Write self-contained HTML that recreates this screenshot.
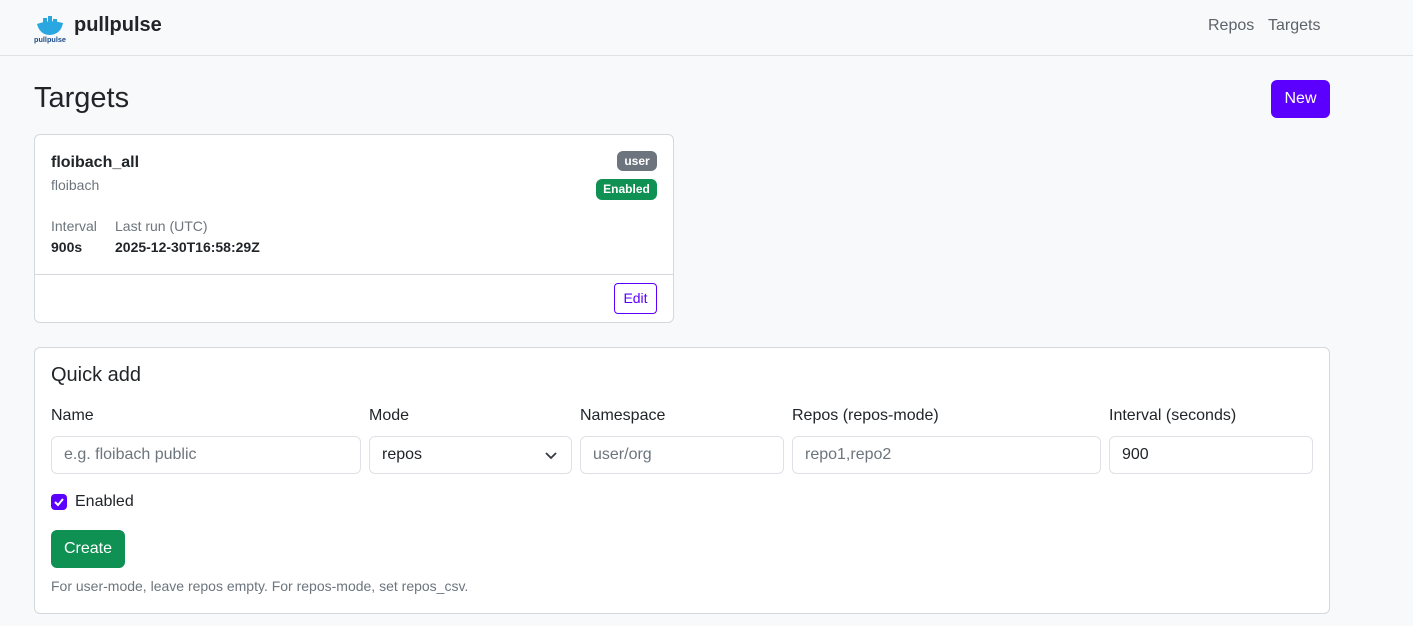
<!DOCTYPE html>
<html><head><meta charset="utf-8"><style>
*{box-sizing:border-box;margin:0;padding:0}
body{width:1413px;height:626px;overflow:hidden;background:#f8f9fa;font-family:"Liberation Sans",sans-serif;color:#212529;font-size:16px;position:relative}
.nav{position:absolute;left:0;top:0;width:1413px;height:56px;background:#f8f9fa;border-bottom:1px solid #dee2e6}
.abs{position:absolute}
.card{position:absolute;background:#fff;border:1px solid #d5d8dc;border-radius:6px}
.badge{position:absolute;color:#fff;font-weight:bold;font-size:12px;border-radius:6px;text-align:center}
.lbl{position:absolute;top:407px;font-size:16px}
.inp{position:absolute;top:436px;height:38px;border:1px solid #dee2e6;border-radius:6px;background:#fff;font-size:16px;padding:9px 12px;color:#6c757d}
</style></head><body>
<div class="nav">
<svg class="abs" style="left:33px;top:10px" width="34" height="34" viewBox="0 0 34 34">
<path d="M4 14 Q17 9 30 13 Q28 24 17 25 Q7 25 4 14Z" fill="#2aa7e0"/>
<rect x="10" y="8" width="4" height="5" fill="#2aa7e0"/><rect x="15" y="6" width="4" height="7" fill="#2aa7e0"/><rect x="20" y="9" width="4" height="4" fill="#2aa7e0"/>
<text x="1" y="32" font-size="7" font-weight="bold" fill="#1a4a8a" font-family="Liberation Sans" textLength="32" lengthAdjust="spacingAndGlyphs">pullpulse</text>
</svg>
<div class="abs" style="left:74px;top:14px;font-size:20px;font-weight:bold">pullpulse</div>
<div class="abs" style="left:1208px;top:17px;color:#5c636a">Repos</div>
<div class="abs" style="left:1268px;top:17px;color:#5c636a">Targets</div>
</div>
<div class="abs" style="left:34px;top:82px;font-size:29px">Targets</div>
<div class="abs" style="left:1271px;top:80px;width:59px;height:38px;background:#5b00ff;color:#fff;border-radius:6px;text-align:center;line-height:38px">New</div>

<div class="card" style="left:34px;top:134px;width:640px;height:189px">
<div class="abs" style="left:16px;top:19px;font-weight:bold;font-size:16px">floibach_all</div>
<div class="abs" style="left:16px;top:42px;color:#6c757d;font-size:14px">floibach</div>
<div class="badge" style="left:582px;top:16px;width:40px;height:20px;line-height:20px;background:#6c757d">user</div>
<div class="badge" style="left:561px;top:44px;width:61px;height:21px;line-height:21px;background:#0f9153">Enabled</div>
<div class="abs" style="left:16px;top:83px;color:#6c757d;font-size:14px">Interval</div>
<div class="abs" style="left:16px;top:104px;font-weight:bold;font-size:14px">900s</div>
<div class="abs" style="left:80px;top:83px;color:#6c757d;font-size:14px">Last run (UTC)</div>
<div class="abs" style="left:80px;top:104px;font-weight:bold;font-size:14px">2025-12-30T16:58:29Z</div>
<div class="abs" style="left:0;top:139px;width:638px;border-top:1px solid #d5d8dc"></div>
<div class="abs" style="left:579px;top:148px;width:43px;height:31px;border:1px solid #5b00ff;border-radius:4px;color:#5b00ff;font-size:14px;text-align:center;line-height:29px">Edit</div>
</div>

<div class="card" style="left:34px;top:347px;width:1296px;height:267px"></div>
<div class="abs" style="left:51px;top:364px;font-size:20px">Quick add</div>
<div class="lbl" style="left:51px">Name</div>
<div class="lbl" style="left:369px">Mode</div>
<div class="lbl" style="left:580px">Namespace</div>
<div class="lbl" style="left:792px">Repos (repos-mode)</div>
<div class="lbl" style="left:1109px">Interval (seconds)</div>
<div class="inp" style="left:51px;width:310px">e.g. floibach public</div>
<div class="inp" style="left:369px;width:203px;color:#212529">repos<svg class="abs" style="right:14px;top:14px" width="12" height="9" viewBox="0 0 12 9"><path d="M1 2 L6 7 L11 2" fill="none" stroke="#343a40" stroke-width="1.8"/></svg></div>
<div class="inp" style="left:580px;width:204px">user/org</div>
<div class="inp" style="left:792px;width:309px">repo1,repo2</div>
<div class="inp" style="left:1109px;width:204px;color:#212529">900</div>
<div class="abs" style="left:51px;top:494px;width:16px;height:16px;background:#5b00ff;border-radius:4px"><svg width="16" height="16" viewBox="0 0 16 16"><path d="M4 8 L7 11 L12 5" fill="none" stroke="#fff" stroke-width="2"/></svg></div>
<div class="abs" style="left:75px;top:493px">Enabled</div>
<div class="abs" style="left:51px;top:530px;width:74px;height:38px;background:#0f9153;color:#fff;border-radius:6px;text-align:center;line-height:38px">Create</div>
<div class="abs" style="left:51px;top:578px;font-size:14px;color:#6c757d">For user-mode, leave repos empty. For repos-mode, set repos_csv.</div>
</body></html>
